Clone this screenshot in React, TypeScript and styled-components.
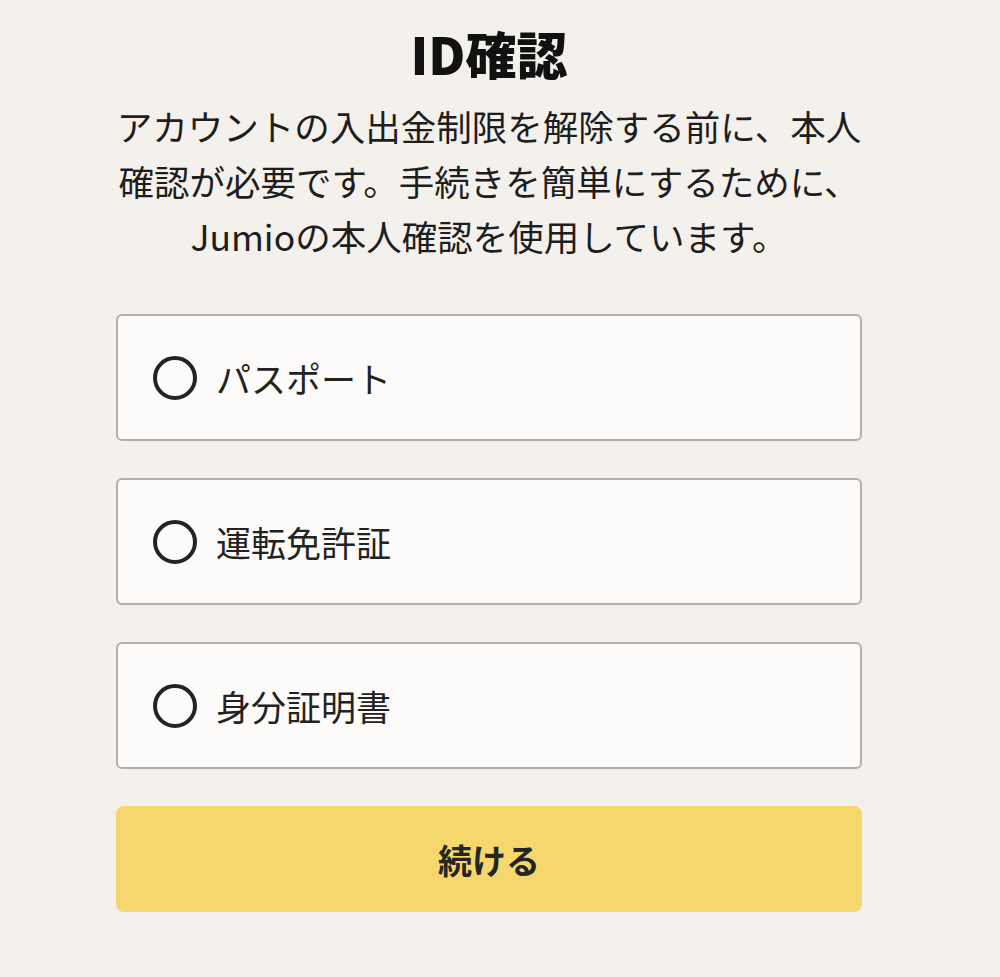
import React, { useState } from "react";
import styled, { createGlobalStyle } from "styled-components";

const GlobalStyle = createGlobalStyle`
  html, body {
    margin: 0;
    padding: 0;
    background: #f4f1ec;
  }
  body {
    font-family: "Noto Sans CJK JP", "Noto Sans", sans-serif;
    color: #222220;
  }
`;

const Page = styled.div`
  min-height: 977px;
  padding: 22px 0 0 116px;
  box-sizing: border-box;
`;

const Column = styled.div`
  width: 746px;
  display: flex;
  flex-direction: column;
`;

const Title = styled.h1`
  margin: 0;
  font-size: 51px;
  line-height: 62px;
  font-weight: 900;
  text-align: center;
  color: #111;
`;

const Lead = styled.p`
  margin: 14px 0 0;
  font-size: 35.5px;
  line-height: 55px;
  text-align: center;
  font-weight: 400;
  color: #1e1e1e;
`;

const Options = styled.div`
  margin-top: 51px;
  display: flex;
  flex-direction: column;
  gap: 37px;
`;

const Option = styled.label<{ $selected: boolean }>`
  height: 127px;
  box-sizing: border-box;
  display: flex;
  align-items: center;
  gap: 19px;
  padding-left: 35px;
  background: #fcfbf9;
  border: 2px solid ${(p) => (p.$selected ? "#222" : "#b3b0ac")};
  border-radius: 6px;
  cursor: pointer;
`;

const Radio = styled.span<{ $selected: boolean }>`
  width: 44px;
  height: 44px;
  box-sizing: border-box;
  border-radius: 50%;
  border: 4px solid #232321;
  display: flex;
  align-items: center;
  justify-content: center;
  flex-shrink: 0;
  &::after {
    content: "";
    width: 20px;
    height: 20px;
    border-radius: 50%;
    background: #232321;
    display: ${(p) => (p.$selected ? "block" : "none")};
  }
`;

const OptionLabel = styled.span`
  font-size: 35px;
  line-height: 1;
  color: #222220;
`;

const ContinueButton = styled.button`
  margin-top: 37px;
  height: 106px;
  border: none;
  border-radius: 8px;
  background: #f5d76e;
  font-family: "Noto Sans CJK JP", "Noto Sans", sans-serif;
  font-size: 34px;
  font-weight: 700;
  color: #252521;
  cursor: pointer;
`;

const items = ["パスポート", "運転免許証", "身分証明書"];

export default function App() {
  const [selected, setSelected] = useState<number | null>(null);
  return (
    <>
      <GlobalStyle />
      <Page>
        <Column>
          <Title>ID確認</Title>
          <Lead>
            アカウントの入出金制限を解除する前に、本人
            <br />
            確認が必要です。手続きを簡単にするために、
            <br />
            Jumioの本人確認を使用しています。
          </Lead>
          <Options>
            {items.map((label, i) => (
              <Option
                key={label}
                $selected={selected === i}
                onClick={() => setSelected(i)}
              >
                <Radio $selected={selected === i} />
                <OptionLabel>{label}</OptionLabel>
              </Option>
            ))}
          </Options>
          <ContinueButton>続ける</ContinueButton>
        </Column>
      </Page>
    </>
  );
}
